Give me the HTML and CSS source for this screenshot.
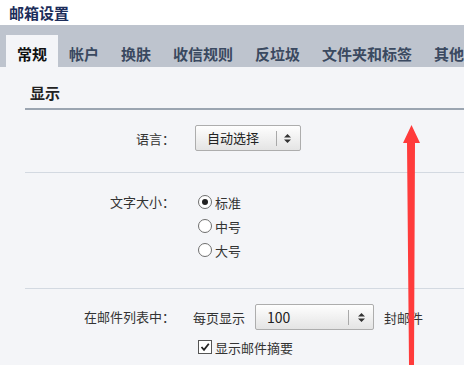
FILE: index.html
```html
<!DOCTYPE html>
<html lang="zh-CN">
<head>
    <meta charset="UTF-8">
    <title>邮箱设置</title>
    <link rel="stylesheet" href="styles.css">
</head>
<body>
    <div class="title">邮箱设置</div>

    <div class="tabs">
        <div class="tab active">常规</div>
        <div class="tab">帐户</div>
        <div class="tab">换肤</div>
        <div class="tab">收信规则</div>
        <div class="tab">反垃圾</div>
        <div class="tab">文件夹和标签</div>
        <div class="tab">其他</div>
    </div>

    <div class="content">
        <div class="section">
            <div class="section-head">显示</div>

            <!-- language -->
            <div class="row row-lang">
                <div class="label">语言：</div>
                <div class="controls">
                    <div class="select select-lang">
                        <span class="select-text">自动选择</span>
                        <span class="select-sep"></span>
                        <svg class="select-arrows" width="7" height="9" viewBox="0 0 7 9"><path d="M3.5 0 L7 3.5 L0 3.5 Z M0 5.5 L7 5.5 L3.5 9 Z" fill="#333"/></svg>
                    </div>
                </div>
            </div>

            <!-- font size -->
            <div class="row row-size">
                <div class="label">文字大小：</div>
                <div class="controls radios">
                    <div class="radio-line"><span class="radio checked"></span>标准</div>
                    <div class="radio-line"><span class="radio"></span>中号</div>
                    <div class="radio-line"><span class="radio"></span>大号</div>
                </div>
            </div>

            <!-- mail list -->
            <div class="row row-list">
                <div class="label">在邮件列表中：</div>
                <div class="controls">
                    <div class="inline">
                        <span>每页显示</span>
                        <div class="select select-count">
                            <span class="select-text">100</span>
                            <span class="select-sep"></span>
                            <svg class="select-arrows" width="7" height="9" viewBox="0 0 7 9"><path d="M3.5 0 L7 3.5 L0 3.5 Z M0 5.5 L7 5.5 L3.5 9 Z" fill="#333"/></svg>
                        </div>
                        <span>封邮件</span>
                    </div>
                    <div class="check-line">
                        <span class="checkbox">
                            <svg width="10" height="10" viewBox="0 0 10 10"><path d="M1.5 5 L4 7.8 L8.8 1.8" fill="none" stroke="#222" stroke-width="1.8"/></svg>
                        </span>显示邮件摘要
                    </div>
                </div>
            </div>
        </div>
    </div>

    <svg class="arrow" width="24" height="240" viewBox="0 0 24 240">
        <polygon points="8.5,0 17,18 12,18 11,240 6,240 4,18 0,18" fill="#ff3b3b"/>
    </svg>
</body>
</html>
```

FILE: styles.css
```css
html, body {
    margin: 0;
    width: 464px;
    height: 365px;
    overflow: hidden;
    position: relative;
    background: #fff;
    font-family: "Noto Sans CJK SC", "Noto Sans", sans-serif;
    font-size: 13px;
    color: #333;
}
.title {
    height: 25px;
    line-height: 25px;
    padding-left: 9px;
    font-size: 15px;
    font-weight: bold;
    color: #1c2d5a;
}
.tabs {
    height: 32px;
    padding: 10px 0 0 6px;
    background: #bec4ce;
    display: flex;
    align-items: flex-end;
    white-space: nowrap;
    overflow: hidden;
}
.tab {
    height: 26px;
    line-height: 26px;
    padding: 6px 11px 0 11px;
    font-size: 15px;
    font-weight: bold;
    color: #3a4960;
    flex-shrink: 0;
}
.tab.active {
    background: #f4f5f8;
    color: #111;
}
.content {
    background: #f4f5f8;
    height: 298px;
    padding-left: 25px;
}
.section-head {
    padding: 16px 0 5px 5px;
    line-height: 20px;
    font-size: 15px;
    font-weight: bold;
    color: #222;
    border-bottom: 2px solid #9ba5b1;
}
.row {
    display: flex;
    border-top: 1px solid #d3d9e1;
}
.section-head + .row {
    border-top: none;
}
.label {
    width: 150px;
    text-align: right;
    flex-shrink: 0;
    font-family: "Noto Sans CJK TC", "Noto Sans CJK SC", sans-serif;
}
.controls {
    margin-left: 20px;
}
.row-lang {
    padding: 15px 0 21px 0;
    align-items: center;
}
.row-size {
    padding: 17px 0 26px 0;
}
.row-size .label {
    line-height: 24px;
}
.row-list {
    padding: 15px 0 0 0;
}
.row-list .label {
    line-height: 26px;
}
.row-list .controls {
    margin-left: 18px;
}
.select {
    height: 24px;
    border: 1px solid #adadad;
    border-radius: 2px;
    background: linear-gradient(#fefefe, #e4e4e4);
    display: flex;
    align-items: center;
    color: #222;
}
.select-text {
    padding-left: 11px;
    line-height: 24px;
}
.select-sep {
    width: 1px;
    height: 15px;
    background: #a9a9a9;
    margin-left: auto;
}
.select-arrows {
    margin: 0 9px 0 7px;
}
.select-lang {
    width: 104px;
}
.select-count {
    width: 117px;
    margin: 0 10px;
    font-size: 14px;
}
.select-count .select-arrows {
    margin: 0 8px 0 9px;
}
.radio-line,
.check-line {
    height: 24px;
    display: flex;
    align-items: center;
    margin-left: 3px;
}
.radio {
    width: 12px;
    height: 12px;
    border: 1px solid #6e6e6e;
    border-radius: 50%;
    background: #fff;
    margin-right: 3px;
    position: relative;
}
.radio.checked::after {
    content: "";
    position: absolute;
    width: 6px;
    height: 6px;
    border-radius: 50%;
    background: #222;
    top: 3px;
    left: 3px;
}
.inline {
    display: flex;
    align-items: center;
}
.check-line {
    margin-top: 5px;
    margin-left: 5px;
}
.checkbox {
    width: 12px;
    height: 12px;
    border: 1px solid #555;
    background: #fff;
    margin-right: 3px;
    display: flex;
    align-items: center;
    justify-content: center;
}
.arrow {
    position: absolute;
    left: 403px;
    top: 125px;
}
```
